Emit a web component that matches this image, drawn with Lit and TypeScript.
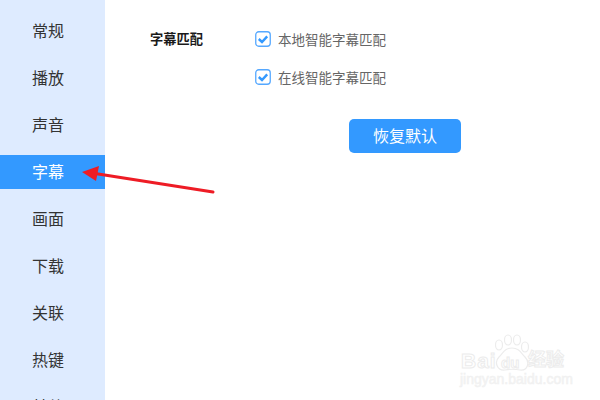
import { LitElement, html, css, svg } from "lit";
import { customElement } from "lit/decorators.js";

const MENU = ["常规", "播放", "声音", "字幕", "画面", "下载", "关联", "热键", "其他"];
const ACTIVE = "字幕";
const OPTIONS = ["本地智能字幕匹配", "在线智能字幕匹配"];

const check = svg`<svg class="check" width="16" height="16" viewBox="0 0 16 16">
  <rect x="0.75" y="0.75" width="14.5" height="14.5" rx="3" fill="#fff" stroke="#55a8ff" stroke-width="1.3"/>
  <path d="M3.8 8 L7 11 L12.2 5.4" fill="none" stroke="#3399ff" stroke-width="2.4"/>
</svg>`;

@customElement("app-root")
export class AppRoot extends LitElement {
  static styles = css`
    :host {
      display: block;
      position: relative;
      width: 600px;
      height: 400px;
      overflow: hidden;
      background: #fff;
      font-family: "Liberation Sans", "Noto Sans CJK SC", sans-serif;
    }
    .page {
      display: flex;
      height: 400px;
    }
    .side {
      width: 105px;
      height: 400px;
      flex: none;
      overflow: hidden;
      box-sizing: border-box;
      padding-top: 14px;
      display: flex;
      flex-direction: column;
      gap: 13px;
      background: #deebff;
    }
    .item {
      flex: none;
      height: 34px;
      box-sizing: border-box;
      padding: 1px 9px 0 0;
      line-height: 34px;
      text-align: center;
      font-size: 16px;
      color: #333;
    }
    .item.active {
      background: #3399ff;
      color: #fff;
    }
    .main {
      flex: 1;
      padding: 20px 0 0 45px;
    }
    .row {
      display: flex;
    }
    .label {
      width: 105px;
      flex: none;
      padding-top: 1px;
      font-size: 13.25px;
      font-weight: 700;
      line-height: 38px;
      color: #1a1a1a;
    }
    .options {
      display: flex;
      flex-direction: column;
    }
    .option {
      height: 38px;
      display: flex;
      align-items: center;
      gap: 7px;
      font-size: 13.5px;
      color: #666;
    }
    .check {
      display: block;
    }
    button {
      display: block;
      width: 112px;
      height: 34px;
      margin: 23px 0 0 199px;
      padding: 0 0 2px;
      border: 0;
      border-radius: 5px;
      background: #3399ff;
      color: #fff;
      font: inherit;
      font-size: 16px;
    }
    .arrow {
      position: absolute;
      left: 0;
      top: 0;
      pointer-events: none;
    }
    .mark {
      position: absolute;
      left: 458px;
      top: 333px;
      width: 130px;
      height: 62px;
    }
    .mark svg {
      position: absolute;
      left: 0;
      top: 0;
    }
    .mark span {
      position: absolute;
      white-space: nowrap;
      line-height: 1;
      color: #fff;
      -webkit-text-stroke: 1px #ececec;
      font-weight: 700;
    }
    .bai {
      left: 3px;
      top: 17px;
      font-size: 21px;
      letter-spacing: 1px;
    }
    .du {
      left: 43px;
      top: 22px;
      font-size: 15px;
    }
    .jy {
      left: 70px;
      top: 18px;
      font-size: 18px;
    }
    .mark span.url {
      left: 2px;
      top: 39px;
      font-size: 14px;
      font-weight: 400;
      color: #f4f4f4;
      -webkit-text-stroke: 0.5px #f0f0f0;
    }
  `;

  render() {
    return html`<div class="page">
        <nav class="side">
          ${MENU.map((m) => html`<div class="item ${m === ACTIVE ? "active" : ""}">${m}</div>`)}
        </nav>
        <section class="main">
          <div class="row">
            <div class="label">字幕匹配</div>
            <div class="options">
              ${OPTIONS.map((o) => html`<div class="option">${check}<span>${o}</span></div>`)}
            </div>
          </div>
          <button>恢复默认</button>
        </section>
      </div>
      <svg class="arrow" width="600" height="400">
        <path d="M213 192 L95 173.5" stroke="#ee1c25" stroke-width="3" fill="none" stroke-linecap="round"/>
        <path d="M82 172 L99 166 L96 181 Z" fill="#ee1c25"/>
      </svg>
      <div class="mark">
        <svg width="130" height="62" viewBox="0 0 130 62" fill="#fff" stroke="#ececec" stroke-width="1.2">
          <ellipse cx="41" cy="12" rx="3.5" ry="5"/>
          <ellipse cx="50" cy="7" rx="3.5" ry="5"/>
          <ellipse cx="59" cy="7" rx="3.5" ry="5"/>
          <ellipse cx="67" cy="14" rx="3.5" ry="5"/>
          <path d="M54 15 C47 15 45 20 41 24 C36 29 39 38 47 37 C52 36 57 36 62 37 C70 38 72 29 67 24 C63 20 61 15 54 15 Z"/>
        </svg>
        <span class="bai">Bai</span>
        <span class="du">du</span>
        <span class="jy">经验</span>
        <span class="url">jingyan.baidu.com</span>
      </div>`;
  }
}
